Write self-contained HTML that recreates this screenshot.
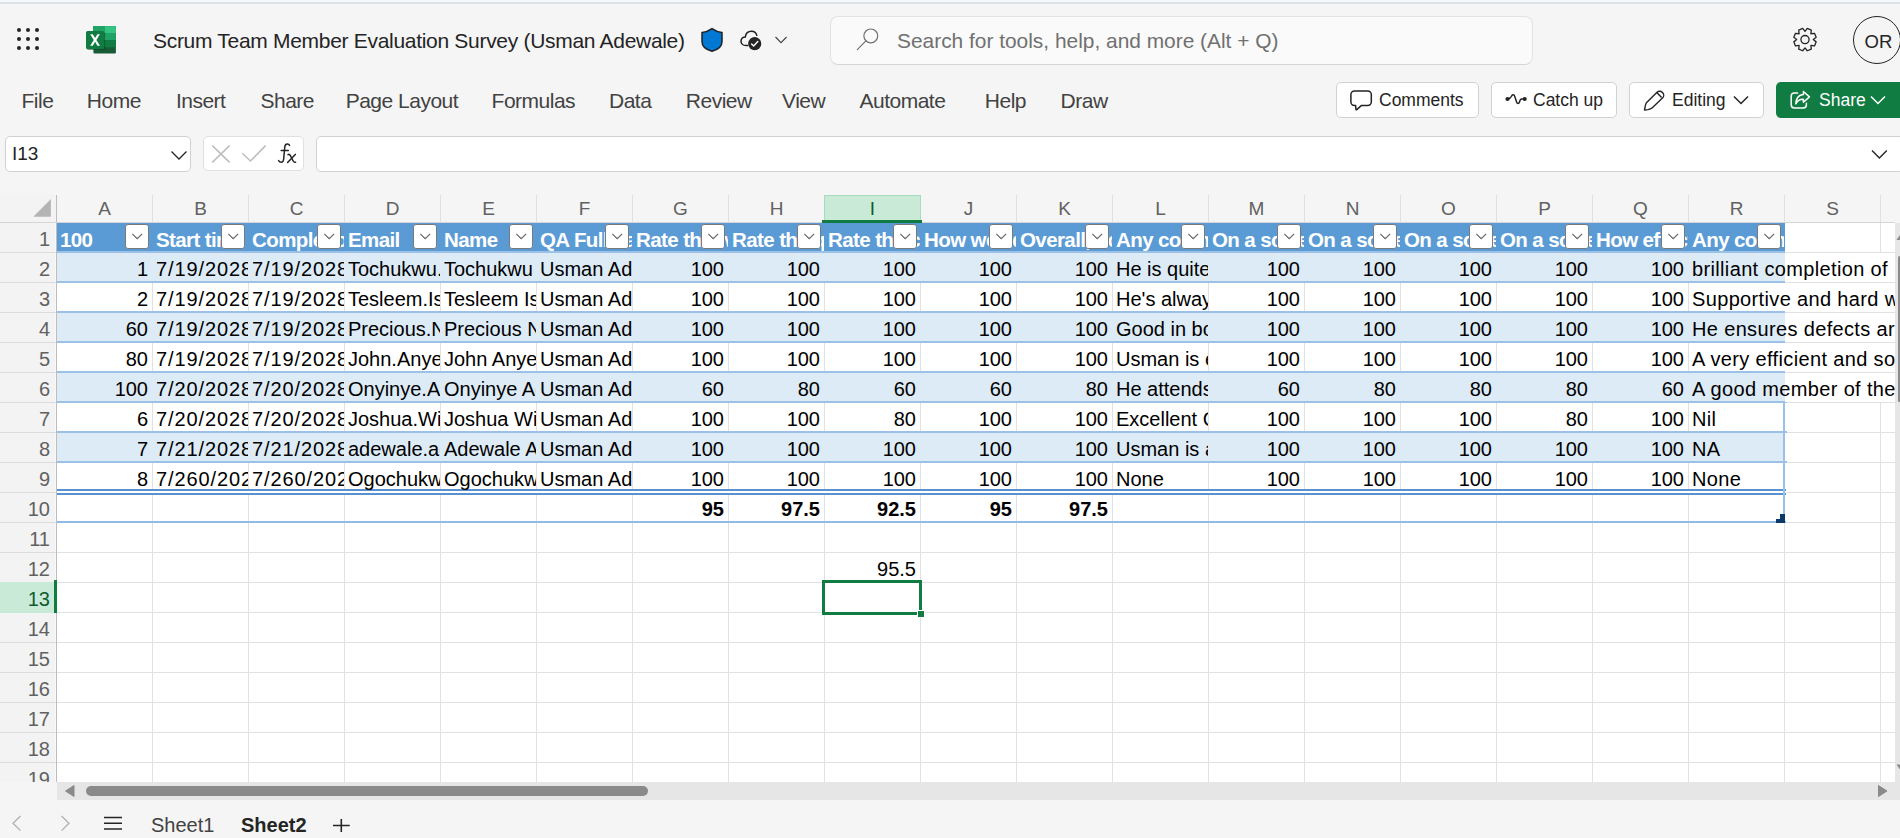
<!DOCTYPE html><html><head><meta charset="utf-8"><style>
*{margin:0;padding:0;box-sizing:border-box}
html,body{width:1900px;height:838px;overflow:hidden;background:#f5f5f5;font-family:"Liberation Sans", sans-serif;}
.a{position:absolute}
.t{position:absolute;white-space:pre;}
.menu{position:absolute;top:88.5px;font-size:21px;letter-spacing:-0.5px;color:#424242;white-space:pre;line-height:24px}
.btn{position:absolute;top:82px;height:36px;background:#fff;border:1px solid #d1d1d1;border-radius:5px}
.btxt{position:absolute;top:7px;font-size:17.5px;color:#242424;white-space:pre;line-height:20px}
.cell{position:absolute;height:30px;overflow:hidden;white-space:pre;font-size:20px;line-height:32px;color:#000}
.r{text-align:right}
.hdr{font-weight:bold;color:#fff;font-size:20.5px;letter-spacing:-0.6px}
.colL{position:absolute;top:195px;height:27px;font-size:19px;color:#616161;text-align:center;line-height:28px}
.rowN{position:absolute;left:0;width:50px;height:30px;font-size:20px;color:#616161;text-align:right;line-height:32px}
.dd{position:absolute;width:24px;height:24px;background:#fff;border:1px solid #7a7a7a;border-radius:3px}
</style></head><body>

<div class="a" style="left:0;top:0;width:1900px;height:2px;background:#f3f9fd"></div>
<div class="a" style="left:0;top:2px;width:1900px;height:2px;background:#dbe3e7"></div>
<div class="a" style="left:17.4px;top:28.1px;width:4.0px;height:4.0px;border-radius:50%;background:#242424"></div>
<div class="a" style="left:17.4px;top:37.0px;width:4.0px;height:4.0px;border-radius:50%;background:#242424"></div>
<div class="a" style="left:17.4px;top:46.0px;width:4.0px;height:4.0px;border-radius:50%;background:#242424"></div>
<div class="a" style="left:26.3px;top:28.1px;width:4.0px;height:4.0px;border-radius:50%;background:#242424"></div>
<div class="a" style="left:26.3px;top:37.0px;width:4.0px;height:4.0px;border-radius:50%;background:#242424"></div>
<div class="a" style="left:26.3px;top:46.0px;width:4.0px;height:4.0px;border-radius:50%;background:#242424"></div>
<div class="a" style="left:35.2px;top:28.1px;width:4.0px;height:4.0px;border-radius:50%;background:#242424"></div>
<div class="a" style="left:35.2px;top:37.0px;width:4.0px;height:4.0px;border-radius:50%;background:#242424"></div>
<div class="a" style="left:35.2px;top:46.0px;width:4.0px;height:4.0px;border-radius:50%;background:#242424"></div>
<svg class="a" style="left:80px;top:20px" width="44" height="40" viewBox="80 20 44 40">
<rect x="93.4" y="26.2" width="22.5" height="27.2" rx="1.2" fill="#185c37"/>
<rect x="93.4" y="26.2" width="22.5" height="21.1" fill="#107c41"/>
<rect x="93.4" y="26.2" width="22.5" height="13.8" fill="#21a366"/>
<rect x="105" y="26.2" width="10.9" height="6.8" fill="#33c481"/>
<rect x="93.4" y="26.2" width="11.6" height="6.8" fill="#21a366"/>
<rect x="87" y="32" width="18.1" height="18" rx="1.5" fill="#0a3d22" opacity="0.5"/>
<rect x="86" y="31" width="18.1" height="17.9" rx="1.5" fill="#107c41"/>
<path d="M90.2 34.3 L92.8 34.3 L95.1 38.1 L97.4 34.3 L99.9 34.3 L96.4 39.9 L100 45.7 L97.4 45.7 L95.1 41.8 L92.8 45.7 L90.2 45.7 L93.8 39.9 Z" fill="#fff"/>
</svg>
<div class="t" style="left:153px;top:29px;font-size:21px;letter-spacing:-0.3px;color:#242424;line-height:24px">Scrum Team Member Evaluation Survey (Usman Adewale)</div>
<svg class="a" style="left:695px;top:20px" width="100" height="40" viewBox="695 20 100 40">
<path d="M712 28.6 C715.5 31 718.5 32.3 722 32.6 L722 41.5 C722 46.5 718.5 49.6 712 51.2 C705.5 49.6 702 46.5 702 41.5 L702 32.6 C705.5 32.3 708.5 31 712 28.6 Z" fill="#0078d4" stroke="#1f1f1f" stroke-width="1.5" stroke-linejoin="round"/>
<path d="M747.5 45.6 L746 45.6 C743 45.6 741 43.6 741 41.2 C741 38.8 743 36.9 745.3 36.9 C745.8 33.3 748.5 31.2 751.5 31.2 C754.3 31.2 756.3 32.9 756.8 35.3" fill="none" stroke="#1f1f1f" stroke-width="1.5" stroke-linecap="round"/>
<circle cx="754.7" cy="43.7" r="6.6" fill="#242424"/>
<path d="M751.6 44 L753.6 46 L757.8 41.6" fill="none" stroke="#fff" stroke-width="1.4" stroke-linecap="round" stroke-linejoin="round"/>
<path d="M775.5 37 L781 42.6 L786.6 37" fill="none" stroke="#424242" stroke-width="1.1"/>
</svg>
<div class="a" style="left:830px;top:15.5px;width:703px;height:49px;background:#fafafa;border:1px solid #e3e3e3;border-bottom-color:#d6d6d6;border-radius:8px"></div>
<svg class="a" style="left:850px;top:24px" width="34" height="32" viewBox="850 24 34 32">
<circle cx="870.8" cy="35.9" r="6.9" fill="none" stroke="#707070" stroke-width="1.2"/>
<path d="M865.9 40.9 L857.3 49.6" stroke="#707070" stroke-width="1.2" stroke-linecap="round"/>
</svg>
<div class="t" style="left:897px;top:29px;font-size:20.9px;color:#707070;line-height:24px">Search for tools, help, and more (Alt + Q)</div>
<svg class="a" style="left:1790px;top:25px" width="30" height="30" viewBox="1790 25 30 30">
<path d="M1805.00 31.30 L1807.27 28.43 L1811.29 30.09 L1810.87 33.73 L1814.51 33.31 L1816.17 37.33 L1813.30 39.60 L1816.17 41.87 L1814.51 45.89 L1810.87 45.47 L1811.29 49.11 L1807.27 50.77 L1805.00 47.90 L1802.73 50.77 L1798.71 49.11 L1799.13 45.47 L1795.49 45.89 L1793.83 41.87 L1796.70 39.60 L1793.83 37.33 L1795.49 33.31 L1799.13 33.73 L1798.71 30.09 L1802.73 28.43 Z" fill="none" stroke="#242424" stroke-width="1.3" stroke-linejoin="round"/>
<circle cx="1805" cy="39.6" r="4.1" fill="none" stroke="#242424" stroke-width="1.3"/>
</svg>
<div class="a" style="left:1853px;top:16px;width:48px;height:48px;border:1.3px solid #242424;border-radius:50%"></div>
<div class="t" style="left:1864.5px;top:30.5px;font-size:18.5px;color:#242424;line-height:22px">OR</div>
<div class="menu" style="left:21.5px">File</div>
<div class="menu" style="left:86.8px">Home</div>
<div class="menu" style="left:175.9px">Insert</div>
<div class="menu" style="left:260.5px">Share</div>
<div class="menu" style="left:345.7px">Page Layout</div>
<div class="menu" style="left:491.6px">Formulas</div>
<div class="menu" style="left:609px">Data</div>
<div class="menu" style="left:685.8px">Review</div>
<div class="menu" style="left:782px">View</div>
<div class="menu" style="left:859.5px">Automate</div>
<div class="menu" style="left:984.8px">Help</div>
<div class="menu" style="left:1060.6px">Draw</div>
<div class="btn" style="left:1336px;width:143px"></div>
<svg class="a" style="left:1340px;top:82px" width="40" height="36" viewBox="1340 82 40 36">
<path d="M1354.4 91 L1367.8 91 C1369.7 91 1371.3 92.6 1371.3 94.5 L1371.3 101.9 C1371.3 103.8 1369.7 105.4 1367.8 105.4 L1361.5 105.4 L1356.8 109.6 C1356.4 109.9 1355.9 109.7 1355.9 109.2 L1355.6 105.4 L1354.4 105.4 C1352.5 105.4 1350.9 103.8 1350.9 101.9 L1350.9 94.5 C1350.9 92.6 1352.5 91 1354.4 91 Z" fill="none" stroke="#242424" stroke-width="1.5" stroke-linejoin="round"/>
</svg>
<div class="btxt" style="left:1379px;top:90px">Comments</div>
<div class="btn" style="left:1491px;width:126px"></div>
<svg class="a" style="left:1500px;top:85px" width="30" height="30" viewBox="1500 85 30 30">
<path d="M1507.5 99.2 C1509.5 98.8 1510.8 97.8 1511.5 96.3 C1512.2 94.6 1513.9 94.2 1514.6 96 L1516.6 102 C1517.2 103.9 1518.9 103.9 1519.5 102 L1520.2 100 C1520.6 99.2 1521 99 1522 99 L1524.7 99" fill="none" stroke="#242424" stroke-width="1.5" stroke-linecap="round" stroke-linejoin="round"/>
<circle cx="1507.5" cy="99" r="2.1" fill="#242424"/><circle cx="1524.7" cy="99" r="2.1" fill="#242424"/>
</svg>
<div class="btxt" style="left:1533px;top:90px">Catch up</div>
<div class="btn" style="left:1629px;width:135px"></div>
<svg class="a" style="left:1636px;top:82px" width="40" height="36" viewBox="1636 82 40 36">
<path d="M1646.4 102.8 L1656.8 92.4 C1658.4 90.8 1660.9 90.8 1662.5 92.4 C1664.1 94 1664.1 96.5 1662.5 98.1 L1652 108 C1650.9 109 1649.4 109.3 1647.9 109.6 L1644.5 110 L1645.1 106.8 C1645.4 105.3 1645.6 104 1646.4 102.8 Z" fill="none" stroke="#242424" stroke-width="1.4" stroke-linejoin="round"/>
<path d="M1656.8 92.6 L1661.6 97.6" stroke="#242424" stroke-width="1.4"/>
</svg>
<div class="btxt" style="left:1672px;top:90px">Editing</div>
<svg class="a" style="left:1732px;top:94px" width="18" height="12" viewBox="0 0 18 12">
<path d="M2 2.5 L9 9.5 L16 2.5" fill="none" stroke="#242424" stroke-width="1.5"/>
</svg>
<div class="a" style="left:1776px;top:82px;width:130px;height:36px;background:#107c41;border-radius:5px"></div>
<svg class="a" style="left:1780px;top:82px" width="40" height="36" viewBox="1780 82 40 36">
<path d="M1797.6 92.9 L1794.4 92.9 C1792.6 92.9 1791.2 94.3 1791.2 96.1 L1791.2 104.8 C1791.2 106.6 1792.6 108 1794.4 108 L1803.2 108 C1805 108 1806.4 106.6 1806.4 104.8 L1806.4 103.2" fill="none" stroke="#fff" stroke-width="1.5" stroke-linecap="round"/>
<path d="M1803.4 91.5 L1809.4 96.9 L1803.4 102.3 L1803.4 99.3 C1800 99.1 1797.6 100.6 1795.8 103.8 C1796.1 98.2 1799 94.7 1803.4 94.4 Z" fill="none" stroke="#fff" stroke-width="1.5" stroke-linejoin="round"/>
</svg>
<div class="btxt" style="left:1819px;top:90px;color:#fff">Share</div>
<svg class="a" style="left:1869px;top:94px" width="18" height="12" viewBox="0 0 18 12">
<path d="M2 2.5 L9 9.5 L16 2.5" fill="none" stroke="#fff" stroke-width="1.5"/>
</svg>
<div class="a" style="left:5px;top:136px;width:186px;height:36px;background:#fff;border:1px solid #d1d1d1;border-radius:5px"></div>
<div class="t" style="left:12px;top:143px;font-size:19px;color:#242424;line-height:22px">I13</div>
<svg class="a" style="left:168px;top:146px" width="22" height="18" viewBox="0 0 22 18">
<path d="M3.5 5.5 L11 13 L18.5 5.5" fill="none" stroke="#242424" stroke-width="1.3"/>
</svg>
<div class="a" style="left:203px;top:136px;width:101px;height:35px;background:#fff;border:1px solid #e0e0e0;border-radius:5px"></div>
<svg class="a" style="left:205px;top:139px" width="100" height="32" viewBox="205 139 100 32">
<path d="M212.3 145.6 L229.6 162.4 M229.6 145.6 L212.3 162.4" stroke="#bdbdbd" stroke-width="1.5"/>
<path d="M242.3 153.2 L250.4 161 L265.6 145.6" fill="none" stroke="#bdbdbd" stroke-width="1.5"/>
<path d="M289.6 145.4 C289 144.2 288.1 143.8 287.1 143.9 C285.6 144.1 285 145.2 284.8 146.8 L283.6 159.5 C283.4 161.3 282.6 162.3 281.2 162.3 C280 162.3 279.2 161.6 278.6 160.6" fill="none" stroke="#242424" stroke-width="1.5" stroke-linecap="round"/>
<path d="M281.2 150.5 L288.3 150.5" stroke="#242424" stroke-width="1.5" stroke-linecap="round"/>
<path d="M288 154.6 C289 154.1 289.8 154.4 290.4 155.6 L293.2 161 C293.8 162.2 294.6 162.6 295.6 162.2" fill="none" stroke="#242424" stroke-width="1.5" stroke-linecap="round"/>
<path d="M295.3 154.4 L287.6 162.4" stroke="#242424" stroke-width="1.5" stroke-linecap="round"/>
</svg>
<div class="a" style="left:316px;top:136px;width:1588px;height:36px;background:#fff;border:1px solid #d1d1d1;border-radius:5px"></div>
<svg class="a" style="left:1866px;top:145px" width="26" height="18" viewBox="1866 145 26 18">
<path d="M1872 150.6 L1879.4 158 L1886.8 150.6" fill="none" stroke="#242424" stroke-width="1.4"/>
</svg>
<div class="a" style="left:57px;top:223px;width:1838px;height:559px;background:#fff"></div>
<div class="a" style="left:0;top:195px;width:56px;height:587px;background:#f3f3f3"></div>
<div class="a" style="left:55px;top:223px;width:1px;height:559px;background:#f9f9f9"></div>
<div class="a" style="left:56px;top:195px;width:1px;height:587px;background:#bdbdbd"></div>
<div class="a" style="left:0;top:222px;width:1895px;height:1px;background:#d6d6d6"></div>
<svg class="a" style="left:30px;top:195px" width="24" height="24" viewBox="30 195 24 24"><path d="M33.3 216.7 L50.9 199 L50.9 216.7 Z" fill="#b4b4b4"/></svg>
<div class="a" style="left:152px;top:195px;width:1px;height:27px;background:#e0e0e0"></div>
<div class="colL" style="left:57px;width:95px">A</div>
<div class="a" style="left:248px;top:195px;width:1px;height:27px;background:#e0e0e0"></div>
<div class="colL" style="left:153px;width:95px">B</div>
<div class="a" style="left:344px;top:195px;width:1px;height:27px;background:#e0e0e0"></div>
<div class="colL" style="left:249px;width:95px">C</div>
<div class="a" style="left:440px;top:195px;width:1px;height:27px;background:#e0e0e0"></div>
<div class="colL" style="left:345px;width:95px">D</div>
<div class="a" style="left:536px;top:195px;width:1px;height:27px;background:#e0e0e0"></div>
<div class="colL" style="left:441px;width:95px">E</div>
<div class="a" style="left:632px;top:195px;width:1px;height:27px;background:#e0e0e0"></div>
<div class="colL" style="left:537px;width:95px">F</div>
<div class="a" style="left:728px;top:195px;width:1px;height:27px;background:#e0e0e0"></div>
<div class="colL" style="left:633px;width:95px">G</div>
<div class="a" style="left:824px;top:195px;width:1px;height:27px;background:#e0e0e0"></div>
<div class="colL" style="left:729px;width:95px">H</div>
<div class="a" style="left:920px;top:195px;width:1px;height:27px;background:#e0e0e0"></div>
<div class="a" style="left:824px;top:195px;width:97px;height:27px;background:#caead8;border:1px solid #a8dcbf;border-bottom:none"></div>
<div class="a" style="left:822px;top:220px;width:100px;height:3px;background:#107c41"></div>
<div class="colL" style="left:825px;width:95px;color:#0e5c2f">I</div>
<div class="a" style="left:1016px;top:195px;width:1px;height:27px;background:#e0e0e0"></div>
<div class="colL" style="left:921px;width:95px">J</div>
<div class="a" style="left:1112px;top:195px;width:1px;height:27px;background:#e0e0e0"></div>
<div class="colL" style="left:1017px;width:95px">K</div>
<div class="a" style="left:1208px;top:195px;width:1px;height:27px;background:#e0e0e0"></div>
<div class="colL" style="left:1113px;width:95px">L</div>
<div class="a" style="left:1304px;top:195px;width:1px;height:27px;background:#e0e0e0"></div>
<div class="colL" style="left:1209px;width:95px">M</div>
<div class="a" style="left:1400px;top:195px;width:1px;height:27px;background:#e0e0e0"></div>
<div class="colL" style="left:1305px;width:95px">N</div>
<div class="a" style="left:1496px;top:195px;width:1px;height:27px;background:#e0e0e0"></div>
<div class="colL" style="left:1401px;width:95px">O</div>
<div class="a" style="left:1592px;top:195px;width:1px;height:27px;background:#e0e0e0"></div>
<div class="colL" style="left:1497px;width:95px">P</div>
<div class="a" style="left:1688px;top:195px;width:1px;height:27px;background:#e0e0e0"></div>
<div class="colL" style="left:1593px;width:95px">Q</div>
<div class="a" style="left:1784px;top:195px;width:1px;height:27px;background:#e0e0e0"></div>
<div class="colL" style="left:1689px;width:95px">R</div>
<div class="a" style="left:1880px;top:195px;width:1px;height:27px;background:#e0e0e0"></div>
<div class="colL" style="left:1785px;width:95px">S</div>
<div class="a" style="left:0;top:252px;width:56px;height:1px;background:#dcdcdc"></div>
<div class="a" style="left:57px;top:252px;width:1838px;height:1px;background:#e1e1e1"></div>
<div class="a" style="left:0;top:282px;width:56px;height:1px;background:#dcdcdc"></div>
<div class="a" style="left:57px;top:282px;width:1838px;height:1px;background:#e1e1e1"></div>
<div class="a" style="left:0;top:312px;width:56px;height:1px;background:#dcdcdc"></div>
<div class="a" style="left:57px;top:312px;width:1838px;height:1px;background:#e1e1e1"></div>
<div class="a" style="left:0;top:342px;width:56px;height:1px;background:#dcdcdc"></div>
<div class="a" style="left:57px;top:342px;width:1838px;height:1px;background:#e1e1e1"></div>
<div class="a" style="left:0;top:372px;width:56px;height:1px;background:#dcdcdc"></div>
<div class="a" style="left:57px;top:372px;width:1838px;height:1px;background:#e1e1e1"></div>
<div class="a" style="left:0;top:402px;width:56px;height:1px;background:#dcdcdc"></div>
<div class="a" style="left:57px;top:402px;width:1838px;height:1px;background:#e1e1e1"></div>
<div class="a" style="left:0;top:432px;width:56px;height:1px;background:#dcdcdc"></div>
<div class="a" style="left:57px;top:432px;width:1838px;height:1px;background:#e1e1e1"></div>
<div class="a" style="left:0;top:462px;width:56px;height:1px;background:#dcdcdc"></div>
<div class="a" style="left:57px;top:462px;width:1838px;height:1px;background:#e1e1e1"></div>
<div class="a" style="left:0;top:492px;width:56px;height:1px;background:#dcdcdc"></div>
<div class="a" style="left:57px;top:492px;width:1838px;height:1px;background:#e1e1e1"></div>
<div class="a" style="left:0;top:522px;width:56px;height:1px;background:#dcdcdc"></div>
<div class="a" style="left:57px;top:522px;width:1838px;height:1px;background:#e1e1e1"></div>
<div class="a" style="left:0;top:552px;width:56px;height:1px;background:#dcdcdc"></div>
<div class="a" style="left:57px;top:552px;width:1838px;height:1px;background:#e1e1e1"></div>
<div class="a" style="left:0;top:582px;width:56px;height:1px;background:#dcdcdc"></div>
<div class="a" style="left:57px;top:582px;width:1838px;height:1px;background:#e1e1e1"></div>
<div class="a" style="left:0;top:612px;width:56px;height:1px;background:#dcdcdc"></div>
<div class="a" style="left:57px;top:612px;width:1838px;height:1px;background:#e1e1e1"></div>
<div class="a" style="left:0;top:642px;width:56px;height:1px;background:#dcdcdc"></div>
<div class="a" style="left:57px;top:642px;width:1838px;height:1px;background:#e1e1e1"></div>
<div class="a" style="left:0;top:672px;width:56px;height:1px;background:#dcdcdc"></div>
<div class="a" style="left:57px;top:672px;width:1838px;height:1px;background:#e1e1e1"></div>
<div class="a" style="left:0;top:702px;width:56px;height:1px;background:#dcdcdc"></div>
<div class="a" style="left:57px;top:702px;width:1838px;height:1px;background:#e1e1e1"></div>
<div class="a" style="left:0;top:732px;width:56px;height:1px;background:#dcdcdc"></div>
<div class="a" style="left:57px;top:732px;width:1838px;height:1px;background:#e1e1e1"></div>
<div class="a" style="left:0;top:762px;width:56px;height:1px;background:#dcdcdc"></div>
<div class="a" style="left:57px;top:762px;width:1838px;height:1px;background:#e1e1e1"></div>
<div class="a" style="left:152px;top:223px;width:1px;height:559px;background:#e1e1e1"></div>
<div class="a" style="left:248px;top:223px;width:1px;height:559px;background:#e1e1e1"></div>
<div class="a" style="left:344px;top:223px;width:1px;height:559px;background:#e1e1e1"></div>
<div class="a" style="left:440px;top:223px;width:1px;height:559px;background:#e1e1e1"></div>
<div class="a" style="left:536px;top:223px;width:1px;height:559px;background:#e1e1e1"></div>
<div class="a" style="left:632px;top:223px;width:1px;height:559px;background:#e1e1e1"></div>
<div class="a" style="left:728px;top:223px;width:1px;height:559px;background:#e1e1e1"></div>
<div class="a" style="left:824px;top:223px;width:1px;height:559px;background:#e1e1e1"></div>
<div class="a" style="left:920px;top:223px;width:1px;height:559px;background:#e1e1e1"></div>
<div class="a" style="left:1016px;top:223px;width:1px;height:559px;background:#e1e1e1"></div>
<div class="a" style="left:1112px;top:223px;width:1px;height:559px;background:#e1e1e1"></div>
<div class="a" style="left:1208px;top:223px;width:1px;height:559px;background:#e1e1e1"></div>
<div class="a" style="left:1304px;top:223px;width:1px;height:559px;background:#e1e1e1"></div>
<div class="a" style="left:1400px;top:223px;width:1px;height:559px;background:#e1e1e1"></div>
<div class="a" style="left:1496px;top:223px;width:1px;height:559px;background:#e1e1e1"></div>
<div class="a" style="left:1592px;top:223px;width:1px;height:559px;background:#e1e1e1"></div>
<div class="a" style="left:1688px;top:223px;width:1px;height:559px;background:#e1e1e1"></div>
<div class="a" style="left:1784px;top:223px;width:1px;height:559px;background:#e1e1e1"></div>
<div class="a" style="left:1880px;top:223px;width:1px;height:559px;background:#e1e1e1"></div>
<div class="rowN" style="top:223px">1</div>
<div class="rowN" style="top:253px">2</div>
<div class="rowN" style="top:283px">3</div>
<div class="rowN" style="top:313px">4</div>
<div class="rowN" style="top:343px">5</div>
<div class="rowN" style="top:373px">6</div>
<div class="rowN" style="top:403px">7</div>
<div class="rowN" style="top:433px">8</div>
<div class="rowN" style="top:463px">9</div>
<div class="rowN" style="top:493px">10</div>
<div class="rowN" style="top:523px">11</div>
<div class="rowN" style="top:553px">12</div>
<div class="a" style="left:0;top:582px;width:56px;height:31px;background:#caead8"></div>
<div class="rowN" style="top:583px;color:#0e5c2f">13</div>
<div class="a" style="left:54px;top:580px;width:3px;height:33px;background:#107c41"></div>
<div class="rowN" style="top:613px">14</div>
<div class="rowN" style="top:643px">15</div>
<div class="rowN" style="top:673px">16</div>
<div class="rowN" style="top:703px">17</div>
<div class="rowN" style="top:733px">18</div>
<div class="rowN" style="top:763px">19</div>
<div class="a" style="left:0;top:782px;width:57px;height:56px;background:#f5f5f5"></div>
<div class="a" style="left:57px;top:223px;width:1728px;height:28px;background:#5b9bd5"></div>
<div class="a" style="left:57px;top:251px;width:1728px;height:2px;background:#9bc2e6"></div>
<div class="a" style="left:57px;top:253px;width:1728px;height:28px;background:#ddebf7"></div>
<div class="a" style="left:57px;top:281px;width:1728px;height:2px;background:#9bc2e6"></div>
<div class="a" style="left:1785px;top:253px;width:110px;height:29px;background:#fff"></div>
<div class="a" style="left:57px;top:311px;width:1728px;height:2px;background:#9bc2e6"></div>
<div class="a" style="left:1785px;top:283px;width:110px;height:29px;background:#fff"></div>
<div class="a" style="left:1784px;top:283px;width:1px;height:28px;background:#fff"></div>
<div class="a" style="left:57px;top:313px;width:1728px;height:28px;background:#ddebf7"></div>
<div class="a" style="left:57px;top:341px;width:1728px;height:2px;background:#9bc2e6"></div>
<div class="a" style="left:1785px;top:313px;width:110px;height:29px;background:#fff"></div>
<div class="a" style="left:57px;top:371px;width:1728px;height:2px;background:#9bc2e6"></div>
<div class="a" style="left:1785px;top:343px;width:110px;height:29px;background:#fff"></div>
<div class="a" style="left:1784px;top:343px;width:1px;height:28px;background:#fff"></div>
<div class="a" style="left:57px;top:373px;width:1728px;height:28px;background:#ddebf7"></div>
<div class="a" style="left:57px;top:401px;width:1730px;height:2px;background:#9bc2e6"></div>
<div class="a" style="left:1785px;top:373px;width:110px;height:29px;background:#fff"></div>
<div class="a" style="left:57px;top:431px;width:1730px;height:2px;background:#9bc2e6"></div>
<div class="a" style="left:57px;top:433px;width:1728px;height:28px;background:#ddebf7"></div>
<div class="a" style="left:57px;top:461px;width:1730px;height:2px;background:#9bc2e6"></div>
<div class="a" style="left:57px;top:491px;width:1729px;height:2px;background:#fff"></div>
<div class="a" style="left:57px;top:489px;width:1729px;height:2px;background:#5693d0"></div>
<div class="a" style="left:57px;top:493px;width:1729px;height:2px;background:#5693d0"></div>
<div class="a" style="left:57px;top:521px;width:1729px;height:2px;background:#8fbbe4"></div>
<div class="a" style="left:1783px;top:401px;width:2px;height:122px;background:#9bc2e6"></div>
<div class="a" style="left:1780px;top:514px;width:5px;height:9px;background:#0b3a6a"></div>
<div class="a" style="left:1776px;top:519px;width:5px;height:4px;background:#0b3a6a"></div>
<div class="cell hdr" style="left:57px;top:223px;width:95px;height:28px;line-height:34px;padding-left:3px">100</div>
<div class="dd" style="left:125px;top:224px;height:25px"><svg width="22" height="22" viewBox="0 0 22 22" style="position:absolute;left:0;top:0"><path d="M6.3 8.8 L11.2 13.7 L16.1 8.8" fill="none" stroke="#616161" stroke-width="1.1"/></svg></div>
<div class="cell hdr" style="left:153px;top:223px;width:95px;height:28px;line-height:34px;padding-left:3px">Start time</div>
<div class="dd" style="left:221px;top:224px;height:25px"><svg width="22" height="22" viewBox="0 0 22 22" style="position:absolute;left:0;top:0"><path d="M6.3 8.8 L11.2 13.7 L16.1 8.8" fill="none" stroke="#616161" stroke-width="1.1"/></svg></div>
<div class="cell hdr" style="left:249px;top:223px;width:95px;height:28px;line-height:34px;padding-left:3px">Completion time</div>
<div class="dd" style="left:317px;top:224px;height:25px"><svg width="22" height="22" viewBox="0 0 22 22" style="position:absolute;left:0;top:0"><path d="M6.3 8.8 L11.2 13.7 L16.1 8.8" fill="none" stroke="#616161" stroke-width="1.1"/></svg></div>
<div class="cell hdr" style="left:345px;top:223px;width:95px;height:28px;line-height:34px;padding-left:3px">Email</div>
<div class="dd" style="left:413px;top:224px;height:25px"><svg width="22" height="22" viewBox="0 0 22 22" style="position:absolute;left:0;top:0"><path d="M6.3 8.8 L11.2 13.7 L16.1 8.8" fill="none" stroke="#616161" stroke-width="1.1"/></svg></div>
<div class="cell hdr" style="left:441px;top:223px;width:95px;height:28px;line-height:34px;padding-left:3px">Name</div>
<div class="dd" style="left:509px;top:224px;height:25px"><svg width="22" height="22" viewBox="0 0 22 22" style="position:absolute;left:0;top:0"><path d="M6.3 8.8 L11.2 13.7 L16.1 8.8" fill="none" stroke="#616161" stroke-width="1.1"/></svg></div>
<div class="cell hdr" style="left:537px;top:223px;width:95px;height:28px;line-height:34px;padding-left:3px">QA Full name</div>
<div class="dd" style="left:605px;top:224px;height:25px"><svg width="22" height="22" viewBox="0 0 22 22" style="position:absolute;left:0;top:0"><path d="M6.3 8.8 L11.2 13.7 L16.1 8.8" fill="none" stroke="#616161" stroke-width="1.1"/></svg></div>
<div class="cell hdr" style="left:633px;top:223px;width:95px;height:28px;line-height:34px;padding-left:3px">Rate the work</div>
<div class="dd" style="left:701px;top:224px;height:25px"><svg width="22" height="22" viewBox="0 0 22 22" style="position:absolute;left:0;top:0"><path d="M6.3 8.8 L11.2 13.7 L16.1 8.8" fill="none" stroke="#616161" stroke-width="1.1"/></svg></div>
<div class="cell hdr" style="left:729px;top:223px;width:95px;height:28px;line-height:34px;padding-left:3px">Rate the quality</div>
<div class="dd" style="left:797px;top:224px;height:25px"><svg width="22" height="22" viewBox="0 0 22 22" style="position:absolute;left:0;top:0"><path d="M6.3 8.8 L11.2 13.7 L16.1 8.8" fill="none" stroke="#616161" stroke-width="1.1"/></svg></div>
<div class="cell hdr" style="left:825px;top:223px;width:95px;height:28px;line-height:34px;padding-left:3px">Rate the communication</div>
<div class="dd" style="left:893px;top:224px;height:25px"><svg width="22" height="22" viewBox="0 0 22 22" style="position:absolute;left:0;top:0"><path d="M6.3 8.8 L11.2 13.7 L16.1 8.8" fill="none" stroke="#616161" stroke-width="1.1"/></svg></div>
<div class="cell hdr" style="left:921px;top:223px;width:95px;height:28px;line-height:34px;padding-left:3px">How well does</div>
<div class="dd" style="left:989px;top:224px;height:25px"><svg width="22" height="22" viewBox="0 0 22 22" style="position:absolute;left:0;top:0"><path d="M6.3 8.8 L11.2 13.7 L16.1 8.8" fill="none" stroke="#616161" stroke-width="1.1"/></svg></div>
<div class="cell hdr" style="left:1017px;top:223px;width:95px;height:28px;line-height:34px;padding-left:3px">Overall, how</div>
<div class="dd" style="left:1085px;top:224px;height:25px"><svg width="22" height="22" viewBox="0 0 22 22" style="position:absolute;left:0;top:0"><path d="M6.3 8.8 L11.2 13.7 L16.1 8.8" fill="none" stroke="#616161" stroke-width="1.1"/></svg></div>
<div class="cell hdr" style="left:1113px;top:223px;width:95px;height:28px;line-height:34px;padding-left:3px">Any comments</div>
<div class="dd" style="left:1181px;top:224px;height:25px"><svg width="22" height="22" viewBox="0 0 22 22" style="position:absolute;left:0;top:0"><path d="M6.3 8.8 L11.2 13.7 L16.1 8.8" fill="none" stroke="#616161" stroke-width="1.1"/></svg></div>
<div class="cell hdr" style="left:1209px;top:223px;width:95px;height:28px;line-height:34px;padding-left:3px">On a scale of</div>
<div class="dd" style="left:1277px;top:224px;height:25px"><svg width="22" height="22" viewBox="0 0 22 22" style="position:absolute;left:0;top:0"><path d="M6.3 8.8 L11.2 13.7 L16.1 8.8" fill="none" stroke="#616161" stroke-width="1.1"/></svg></div>
<div class="cell hdr" style="left:1305px;top:223px;width:95px;height:28px;line-height:34px;padding-left:3px">On a scale of</div>
<div class="dd" style="left:1373px;top:224px;height:25px"><svg width="22" height="22" viewBox="0 0 22 22" style="position:absolute;left:0;top:0"><path d="M6.3 8.8 L11.2 13.7 L16.1 8.8" fill="none" stroke="#616161" stroke-width="1.1"/></svg></div>
<div class="cell hdr" style="left:1401px;top:223px;width:95px;height:28px;line-height:34px;padding-left:3px">On a scale of</div>
<div class="dd" style="left:1469px;top:224px;height:25px"><svg width="22" height="22" viewBox="0 0 22 22" style="position:absolute;left:0;top:0"><path d="M6.3 8.8 L11.2 13.7 L16.1 8.8" fill="none" stroke="#616161" stroke-width="1.1"/></svg></div>
<div class="cell hdr" style="left:1497px;top:223px;width:95px;height:28px;line-height:34px;padding-left:3px">On a scale of</div>
<div class="dd" style="left:1565px;top:224px;height:25px"><svg width="22" height="22" viewBox="0 0 22 22" style="position:absolute;left:0;top:0"><path d="M6.3 8.8 L11.2 13.7 L16.1 8.8" fill="none" stroke="#616161" stroke-width="1.1"/></svg></div>
<div class="cell hdr" style="left:1593px;top:223px;width:95px;height:28px;line-height:34px;padding-left:3px">How effective</div>
<div class="dd" style="left:1661px;top:224px;height:25px"><svg width="22" height="22" viewBox="0 0 22 22" style="position:absolute;left:0;top:0"><path d="M6.3 8.8 L11.2 13.7 L16.1 8.8" fill="none" stroke="#616161" stroke-width="1.1"/></svg></div>
<div class="cell hdr" style="left:1689px;top:223px;width:95px;height:28px;line-height:34px;padding-left:3px">Any comments or</div>
<div class="dd" style="left:1757px;top:224px;height:25px"><svg width="22" height="22" viewBox="0 0 22 22" style="position:absolute;left:0;top:0"><path d="M6.3 8.8 L11.2 13.7 L16.1 8.8" fill="none" stroke="#616161" stroke-width="1.1"/></svg></div>
<div class="cell r" style="left:57px;top:253px;width:95px;padding-right:4px">1</div>
<div class="cell" style="left:153px;top:253px;width:95px;padding-left:3px;letter-spacing:0.9px">7/19/2028 10:3</div>
<div class="cell" style="left:249px;top:253px;width:95px;padding-left:3px;letter-spacing:0.9px">7/19/2028 10:3</div>
<div class="cell" style="left:345px;top:253px;width:95px;padding-left:3px">Tochukwu.Okeke</div>
<div class="cell" style="left:441px;top:253px;width:95px;padding-left:3px">Tochukwu Okeke</div>
<div class="cell" style="left:537px;top:253px;width:95px;padding-left:3px">Usman Adewale</div>
<div class="cell r" style="left:633px;top:253px;width:95px;padding-right:4px">100</div>
<div class="cell r" style="left:729px;top:253px;width:95px;padding-right:4px">100</div>
<div class="cell r" style="left:825px;top:253px;width:95px;padding-right:4px">100</div>
<div class="cell r" style="left:921px;top:253px;width:95px;padding-right:4px">100</div>
<div class="cell r" style="left:1017px;top:253px;width:95px;padding-right:4px">100</div>
<div class="cell" style="left:1113px;top:253px;width:95px;padding-left:3px">He is quite good</div>
<div class="cell r" style="left:1209px;top:253px;width:95px;padding-right:4px">100</div>
<div class="cell r" style="left:1305px;top:253px;width:95px;padding-right:4px">100</div>
<div class="cell r" style="left:1401px;top:253px;width:95px;padding-right:4px">100</div>
<div class="cell r" style="left:1497px;top:253px;width:95px;padding-right:4px">100</div>
<div class="cell r" style="left:1593px;top:253px;width:95px;padding-right:4px">100</div>
<div class="cell" style="left:1689px;top:253px;width:206px;padding-left:3px;letter-spacing:0.35px">brilliant completion of</div>
<div class="cell r" style="left:57px;top:283px;width:95px;padding-right:4px">2</div>
<div class="cell" style="left:153px;top:283px;width:95px;padding-left:3px;letter-spacing:0.9px">7/19/2028 10:3</div>
<div class="cell" style="left:249px;top:283px;width:95px;padding-left:3px;letter-spacing:0.9px">7/19/2028 10:3</div>
<div class="cell" style="left:345px;top:283px;width:95px;padding-left:3px">Tesleem.Isola</div>
<div class="cell" style="left:441px;top:283px;width:95px;padding-left:3px">Tesleem Isola</div>
<div class="cell" style="left:537px;top:283px;width:95px;padding-left:3px">Usman Adewale</div>
<div class="cell r" style="left:633px;top:283px;width:95px;padding-right:4px">100</div>
<div class="cell r" style="left:729px;top:283px;width:95px;padding-right:4px">100</div>
<div class="cell r" style="left:825px;top:283px;width:95px;padding-right:4px">100</div>
<div class="cell r" style="left:921px;top:283px;width:95px;padding-right:4px">100</div>
<div class="cell r" style="left:1017px;top:283px;width:95px;padding-right:4px">100</div>
<div class="cell" style="left:1113px;top:283px;width:95px;padding-left:3px">He's always</div>
<div class="cell r" style="left:1209px;top:283px;width:95px;padding-right:4px">100</div>
<div class="cell r" style="left:1305px;top:283px;width:95px;padding-right:4px">100</div>
<div class="cell r" style="left:1401px;top:283px;width:95px;padding-right:4px">100</div>
<div class="cell r" style="left:1497px;top:283px;width:95px;padding-right:4px">100</div>
<div class="cell r" style="left:1593px;top:283px;width:95px;padding-right:4px">100</div>
<div class="cell" style="left:1689px;top:283px;width:206px;padding-left:3px;letter-spacing:0.35px">Supportive and hard working</div>
<div class="cell r" style="left:57px;top:313px;width:95px;padding-right:4px">60</div>
<div class="cell" style="left:153px;top:313px;width:95px;padding-left:3px;letter-spacing:0.9px">7/19/2028 10:3</div>
<div class="cell" style="left:249px;top:313px;width:95px;padding-left:3px;letter-spacing:0.9px">7/19/2028 10:3</div>
<div class="cell" style="left:345px;top:313px;width:95px;padding-left:3px">Precious.Nwosu</div>
<div class="cell" style="left:441px;top:313px;width:95px;padding-left:3px">Precious Nwosu</div>
<div class="cell" style="left:537px;top:313px;width:95px;padding-left:3px">Usman Adewale</div>
<div class="cell r" style="left:633px;top:313px;width:95px;padding-right:4px">100</div>
<div class="cell r" style="left:729px;top:313px;width:95px;padding-right:4px">100</div>
<div class="cell r" style="left:825px;top:313px;width:95px;padding-right:4px">100</div>
<div class="cell r" style="left:921px;top:313px;width:95px;padding-right:4px">100</div>
<div class="cell r" style="left:1017px;top:313px;width:95px;padding-right:4px">100</div>
<div class="cell" style="left:1113px;top:313px;width:95px;padding-left:3px">Good in both</div>
<div class="cell r" style="left:1209px;top:313px;width:95px;padding-right:4px">100</div>
<div class="cell r" style="left:1305px;top:313px;width:95px;padding-right:4px">100</div>
<div class="cell r" style="left:1401px;top:313px;width:95px;padding-right:4px">100</div>
<div class="cell r" style="left:1497px;top:313px;width:95px;padding-right:4px">100</div>
<div class="cell r" style="left:1593px;top:313px;width:95px;padding-right:4px">100</div>
<div class="cell" style="left:1689px;top:313px;width:206px;padding-left:3px;letter-spacing:0.35px">He ensures defects are fixed</div>
<div class="cell r" style="left:57px;top:343px;width:95px;padding-right:4px">80</div>
<div class="cell" style="left:153px;top:343px;width:95px;padding-left:3px;letter-spacing:0.9px">7/19/2028 10:3</div>
<div class="cell" style="left:249px;top:343px;width:95px;padding-left:3px;letter-spacing:0.9px">7/19/2028 10:3</div>
<div class="cell" style="left:345px;top:343px;width:95px;padding-left:3px">John.Anyebe</div>
<div class="cell" style="left:441px;top:343px;width:95px;padding-left:3px">John Anyebe</div>
<div class="cell" style="left:537px;top:343px;width:95px;padding-left:3px">Usman Adewale</div>
<div class="cell r" style="left:633px;top:343px;width:95px;padding-right:4px">100</div>
<div class="cell r" style="left:729px;top:343px;width:95px;padding-right:4px">100</div>
<div class="cell r" style="left:825px;top:343px;width:95px;padding-right:4px">100</div>
<div class="cell r" style="left:921px;top:343px;width:95px;padding-right:4px">100</div>
<div class="cell r" style="left:1017px;top:343px;width:95px;padding-right:4px">100</div>
<div class="cell" style="left:1113px;top:343px;width:95px;padding-left:3px">Usman is efficient</div>
<div class="cell r" style="left:1209px;top:343px;width:95px;padding-right:4px">100</div>
<div class="cell r" style="left:1305px;top:343px;width:95px;padding-right:4px">100</div>
<div class="cell r" style="left:1401px;top:343px;width:95px;padding-right:4px">100</div>
<div class="cell r" style="left:1497px;top:343px;width:95px;padding-right:4px">100</div>
<div class="cell r" style="left:1593px;top:343px;width:95px;padding-right:4px">100</div>
<div class="cell" style="left:1689px;top:343px;width:206px;padding-left:3px;letter-spacing:0.35px">A very efficient and sound</div>
<div class="cell r" style="left:57px;top:373px;width:95px;padding-right:4px">100</div>
<div class="cell" style="left:153px;top:373px;width:95px;padding-left:3px;letter-spacing:0.9px">7/20/2028 10:3</div>
<div class="cell" style="left:249px;top:373px;width:95px;padding-left:3px;letter-spacing:0.9px">7/20/2028 10:3</div>
<div class="cell" style="left:345px;top:373px;width:95px;padding-left:3px">Onyinye.Agu</div>
<div class="cell" style="left:441px;top:373px;width:95px;padding-left:3px">Onyinye Agu</div>
<div class="cell" style="left:537px;top:373px;width:95px;padding-left:3px">Usman Adewale</div>
<div class="cell r" style="left:633px;top:373px;width:95px;padding-right:4px">60</div>
<div class="cell r" style="left:729px;top:373px;width:95px;padding-right:4px">80</div>
<div class="cell r" style="left:825px;top:373px;width:95px;padding-right:4px">60</div>
<div class="cell r" style="left:921px;top:373px;width:95px;padding-right:4px">60</div>
<div class="cell r" style="left:1017px;top:373px;width:95px;padding-right:4px">80</div>
<div class="cell" style="left:1113px;top:373px;width:95px;padding-left:3px">He attends</div>
<div class="cell r" style="left:1209px;top:373px;width:95px;padding-right:4px">60</div>
<div class="cell r" style="left:1305px;top:373px;width:95px;padding-right:4px">80</div>
<div class="cell r" style="left:1401px;top:373px;width:95px;padding-right:4px">80</div>
<div class="cell r" style="left:1497px;top:373px;width:95px;padding-right:4px">80</div>
<div class="cell r" style="left:1593px;top:373px;width:95px;padding-right:4px">60</div>
<div class="cell" style="left:1689px;top:373px;width:206px;padding-left:3px;letter-spacing:0.35px">A good member of the</div>
<div class="cell r" style="left:57px;top:403px;width:95px;padding-right:4px">6</div>
<div class="cell" style="left:153px;top:403px;width:95px;padding-left:3px;letter-spacing:0.9px">7/20/2028 10:3</div>
<div class="cell" style="left:249px;top:403px;width:95px;padding-left:3px;letter-spacing:0.9px">7/20/2028 10:3</div>
<div class="cell" style="left:345px;top:403px;width:95px;padding-left:3px">Joshua.Williams</div>
<div class="cell" style="left:441px;top:403px;width:95px;padding-left:3px">Joshua Williams</div>
<div class="cell" style="left:537px;top:403px;width:95px;padding-left:3px">Usman Adewale</div>
<div class="cell r" style="left:633px;top:403px;width:95px;padding-right:4px">100</div>
<div class="cell r" style="left:729px;top:403px;width:95px;padding-right:4px">100</div>
<div class="cell r" style="left:825px;top:403px;width:95px;padding-right:4px">80</div>
<div class="cell r" style="left:921px;top:403px;width:95px;padding-right:4px">100</div>
<div class="cell r" style="left:1017px;top:403px;width:95px;padding-right:4px">100</div>
<div class="cell" style="left:1113px;top:403px;width:95px;padding-left:3px">Excellent Communication</div>
<div class="cell r" style="left:1209px;top:403px;width:95px;padding-right:4px">100</div>
<div class="cell r" style="left:1305px;top:403px;width:95px;padding-right:4px">100</div>
<div class="cell r" style="left:1401px;top:403px;width:95px;padding-right:4px">100</div>
<div class="cell r" style="left:1497px;top:403px;width:95px;padding-right:4px">80</div>
<div class="cell r" style="left:1593px;top:403px;width:95px;padding-right:4px">100</div>
<div class="cell" style="left:1689px;top:403px;width:206px;padding-left:3px;letter-spacing:0.35px">Nil</div>
<div class="cell r" style="left:57px;top:433px;width:95px;padding-right:4px">7</div>
<div class="cell" style="left:153px;top:433px;width:95px;padding-left:3px;letter-spacing:0.9px">7/21/2028 10:3</div>
<div class="cell" style="left:249px;top:433px;width:95px;padding-left:3px;letter-spacing:0.9px">7/21/2028 10:3</div>
<div class="cell" style="left:345px;top:433px;width:95px;padding-left:3px">adewale.ade</div>
<div class="cell" style="left:441px;top:433px;width:95px;padding-left:3px">Adewale Ade</div>
<div class="cell" style="left:537px;top:433px;width:95px;padding-left:3px">Usman Adewale</div>
<div class="cell r" style="left:633px;top:433px;width:95px;padding-right:4px">100</div>
<div class="cell r" style="left:729px;top:433px;width:95px;padding-right:4px">100</div>
<div class="cell r" style="left:825px;top:433px;width:95px;padding-right:4px">100</div>
<div class="cell r" style="left:921px;top:433px;width:95px;padding-right:4px">100</div>
<div class="cell r" style="left:1017px;top:433px;width:95px;padding-right:4px">100</div>
<div class="cell" style="left:1113px;top:433px;width:95px;padding-left:3px">Usman is a</div>
<div class="cell r" style="left:1209px;top:433px;width:95px;padding-right:4px">100</div>
<div class="cell r" style="left:1305px;top:433px;width:95px;padding-right:4px">100</div>
<div class="cell r" style="left:1401px;top:433px;width:95px;padding-right:4px">100</div>
<div class="cell r" style="left:1497px;top:433px;width:95px;padding-right:4px">100</div>
<div class="cell r" style="left:1593px;top:433px;width:95px;padding-right:4px">100</div>
<div class="cell" style="left:1689px;top:433px;width:206px;padding-left:3px;letter-spacing:0.35px">NA</div>
<div class="cell r" style="left:57px;top:463px;width:95px;padding-right:4px">8</div>
<div class="cell" style="left:153px;top:463px;width:95px;padding-left:3px;letter-spacing:0.9px">7/260/2023 10</div>
<div class="cell" style="left:249px;top:463px;width:95px;padding-left:3px;letter-spacing:0.9px">7/260/2023 10</div>
<div class="cell" style="left:345px;top:463px;width:95px;padding-left:3px">Ogochukwu.Eze</div>
<div class="cell" style="left:441px;top:463px;width:95px;padding-left:3px">Ogochukwu Eze</div>
<div class="cell" style="left:537px;top:463px;width:95px;padding-left:3px">Usman Adewale</div>
<div class="cell r" style="left:633px;top:463px;width:95px;padding-right:4px">100</div>
<div class="cell r" style="left:729px;top:463px;width:95px;padding-right:4px">100</div>
<div class="cell r" style="left:825px;top:463px;width:95px;padding-right:4px">100</div>
<div class="cell r" style="left:921px;top:463px;width:95px;padding-right:4px">100</div>
<div class="cell r" style="left:1017px;top:463px;width:95px;padding-right:4px">100</div>
<div class="cell" style="left:1113px;top:463px;width:95px;padding-left:3px">None</div>
<div class="cell r" style="left:1209px;top:463px;width:95px;padding-right:4px">100</div>
<div class="cell r" style="left:1305px;top:463px;width:95px;padding-right:4px">100</div>
<div class="cell r" style="left:1401px;top:463px;width:95px;padding-right:4px">100</div>
<div class="cell r" style="left:1497px;top:463px;width:95px;padding-right:4px">100</div>
<div class="cell r" style="left:1593px;top:463px;width:95px;padding-right:4px">100</div>
<div class="cell" style="left:1689px;top:463px;width:206px;padding-left:3px;letter-spacing:0.35px">None</div>
<div class="cell r" style="left:633px;top:493px;width:95px;padding-right:4px;font-weight:bold">95</div>
<div class="cell r" style="left:729px;top:493px;width:95px;padding-right:4px;font-weight:bold">97.5</div>
<div class="cell r" style="left:825px;top:493px;width:95px;padding-right:4px;font-weight:bold">92.5</div>
<div class="cell r" style="left:921px;top:493px;width:95px;padding-right:4px;font-weight:bold">95</div>
<div class="cell r" style="left:1017px;top:493px;width:95px;padding-right:4px;font-weight:bold">97.5</div>
<div class="cell r" style="left:825px;top:553px;width:95px;padding-right:4px">95.5</div>
<div class="a" style="left:822px;top:580px;width:100px;height:35px;border:3px solid #107c41"></div>
<div class="a" style="left:917px;top:610px;width:8px;height:8px;background:#107c41;border:1px solid #fff"></div>
<div class="a" style="left:57px;top:782px;width:1838px;height:18px;background:#e6e6e6"></div>
<svg class="a" style="left:60px;top:782px" width="20" height="18" viewBox="60 782 20 18"><path d="M74 785.5 L74 796.5 L65.5 791 Z" fill="#8a8a8a" stroke="#8a8a8a" stroke-width="1" stroke-linejoin="round"/></svg>
<div class="a" style="left:86px;top:786px;width:562px;height:10px;background:#8a8a8a;border-radius:5px"></div>
<svg class="a" style="left:1872px;top:782px" width="20" height="18" viewBox="1872 782 20 18"><path d="M1878.5 785.5 L1878.5 796.5 L1887 791 Z" fill="#8a8a8a" stroke="#8a8a8a" stroke-width="1" stroke-linejoin="round"/></svg>
<div class="a" style="left:1895px;top:223px;width:5px;height:577px;background:#e6e6e6"></div>
<div class="a" style="left:1898px;top:256px;width:3px;height:146px;background:#8a8a8a;border-radius:2px"></div>
<svg class="a" style="left:1894px;top:232px" width="6" height="10" viewBox="1894 232 6 10"><path d="M1900 235 L1896.5 240 L1900 240 Z" fill="#8a8a8a"/></svg>
<svg class="a" style="left:1894px;top:762px" width="6" height="10" viewBox="1894 762 6 10"><path d="M1896.5 764.5 L1900 764.5 L1900 769.5 Z" fill="#8a8a8a"/></svg>
<svg class="a" style="left:0;top:805px" width="140" height="33" viewBox="0 805 140 33">
<path d="M20.5 816 L13 823.3 L20.5 830.6" fill="none" stroke="#b0b0b0" stroke-width="1.3"/>
<path d="M61.5 816 L69 823.3 L61.5 830.6" fill="none" stroke="#b0b0b0" stroke-width="1.3"/>
<path d="M104 817.5 L122 817.5 M104 823.3 L122 823.3 M104 829 L122 829" stroke="#242424" stroke-width="1.6"/>
</svg>
<div class="t" style="left:151px;top:812.5px;font-size:20px;color:#424242;line-height:24px">Sheet1</div>
<div class="t" style="left:241px;top:812.5px;font-size:20px;font-weight:bold;color:#242424;line-height:24px">Sheet2</div>
<svg class="a" style="left:330px;top:815px" width="24" height="20" viewBox="330 815 24 20"><path d="M341.3 819 L341.3 832 M333 825.5 L349.7 825.5" stroke="#242424" stroke-width="1.6"/></svg>
</body></html>
